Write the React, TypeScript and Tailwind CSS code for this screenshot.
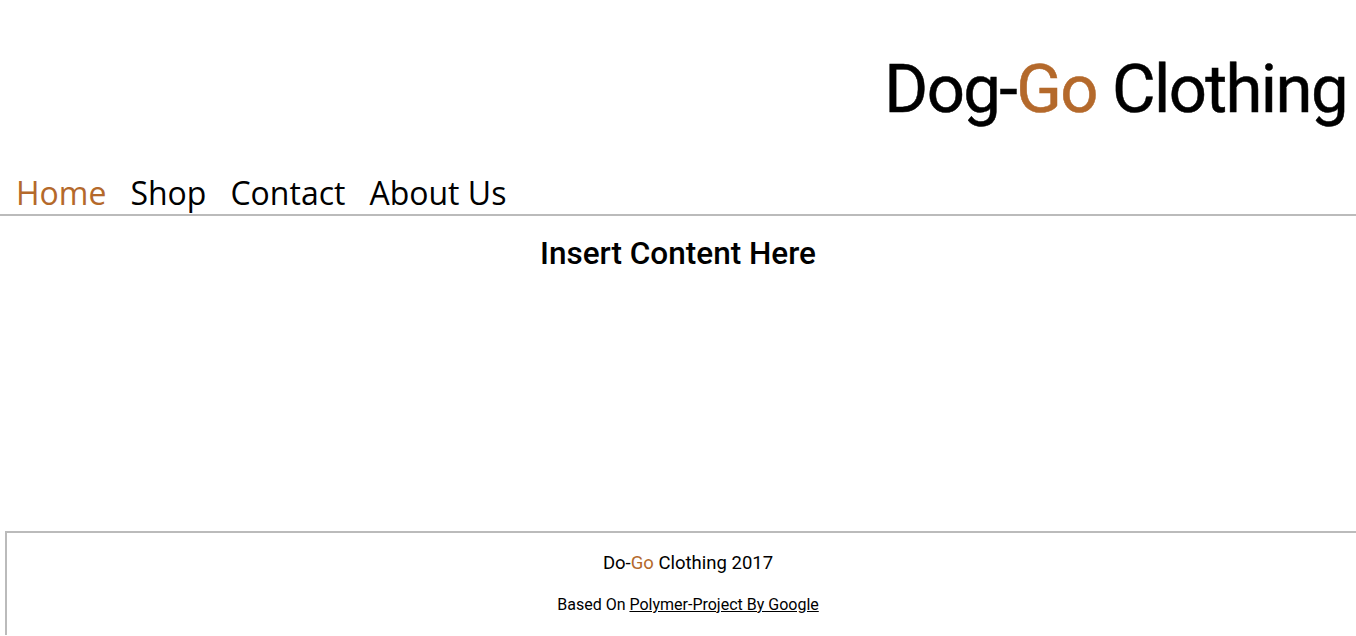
export default function App() {
  return (
    <div className="min-h-[636px] overflow-hidden bg-white text-black font-['Roboto',sans-serif]">
      <header>
        <div className="flex justify-end pt-[44px] pr-[9px]">
          <h1 className="text-[67px] leading-[90px] font-normal tracking-[-1.6px] [-webkit-text-stroke:0.5px]">
            Dog-<span className="text-[#b4692b]">Go</span> Clothing
          </h1>
        </div>
        <nav className="mt-[38px] flex gap-[24px] border-b-2 border-[#bbbbbb] px-[16px] font-['Open_Sans',sans-serif] text-[32px] leading-[42px]">
          <a className="text-[#b4692b]">Home</a>
          <a>Shop</a>
          <a>Contact</a>
          <a>About Us</a>
        </nav>
      </header>

      <main className="h-[315px] pt-[17px] text-center">
        <h2 className="text-[31.5px] font-medium leading-[42px]">Insert Content Here</h2>
      </main>

      <footer className="ml-[5px] w-[1364px] border-l-2 border-t-2 border-[#bbbbbb] pt-[18px] pb-[20px] text-center">
        <p className="text-[18.5px] leading-[24px]">
          Do-<span className="text-[#b4692b]">Go</span> Clothing 2017
        </p>
        <p className="mt-[20px] text-[16px] leading-[20px]">
          Based On <a className="underline">Polymer-Project By Google</a>
        </p>
      </footer>
    </div>
  )
}
